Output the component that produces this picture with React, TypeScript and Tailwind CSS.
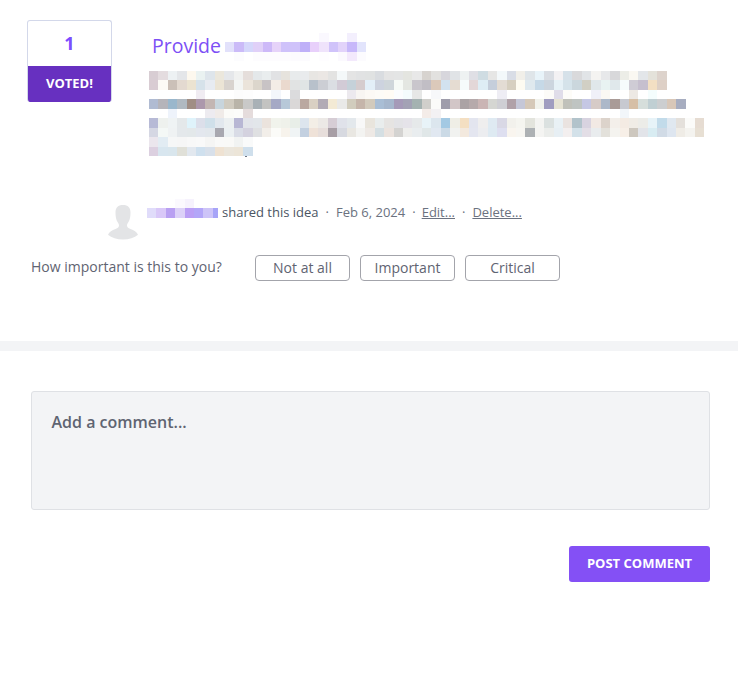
const CELL = 9.41;

const body: string[] = [
  "d8cdd3 e4dcdf edf1f3 e4e6e9 fdf8ee eaf2f1 dee5eb ebe7dc e5e7ea f0f1f0 e5dedb e4e8ea e9edee e1e2e4 e6e3dd e8ebec e9ebed e8e6e3 ebe7e4 e3e3e2 f4f8f9 e4e4e4 e1e2e3 e0e2e2 d9dce0 e4e4e4 e4e5e5 e4e5e0 e8e8e8 d7d3cf e2e1df d7d6dc e0e3e6 eef2f2 dfdfe5 cfdce2 e6e6e5 f3f8fa d9dde6 f1efe9 dfe5e9 e8f3f9 d9dde3 f3f1f3 d6e1e9 d9d9db e1e4e7 f4f3f1 e7e8ea d8d8da ecede7 faf8f2 e3e6e9 e4e2da ddd3cc",
  "d9ccd3 fcfaf6 cbc0b8 e3d9d0 ebe3d1 d6e2ea e7ebf1 ebe4d5 d8d3ce f3f5f3 ebe4da dcd6cc c8c3c5 f3ece6 ead9ce e1e3e3 e0e5e5 b8c1cb ccced4 dbdee3 d2cbd6 c5d1d9 d5ccce e3eff8 cdd3df cfd6da f6faf6 e4e7e2 c9c6cc c1bec5 dbc9ba d2e2ef e5dcd2 f6fbfb e3d7d8 deedf5 c5cedb e3dcd4 d6cfc0 fdfbf1 dfe9ee c6d9e7 ccd5de e6f1f6 d5e3ea cbd7dd d1cfc4 e0e7ea e8f3f2 e0e8eb f6fbfc cfccd5 c6bfce f3dfc3 ded0c6",
  "fff fff fff fff fff f0ecf2 fff fff fff fcfcfc fdfdfd fff fff f3f6fb fff dbdbdd fff fff fff fff fff ece9ee f8f5f2 fcf9f5 fdfbf7 fffbf5 fbfcfe f4fbfd e6e7e6 fff f7f8fa fff fff fff fff fff fff eeedf4 fff fff fff fff fcfbf8 e0dde9 fdfcf8 fff fff f0f0f8 faf8f3 fff fff ede9e4 fff f4fdfd fff",
  "b0bbd2 b5b4ba 9ab7cc b0b9c1 a08e85 ac98ac c3b6b3 c8d5dd d0cbc0 b9b4a9 c9c9c8 a9b1b6 c3c3c1 a5a9c5 b7c8d8 dad8d8 baa8a0 d9d0c3 b2abb5 f3ead5 e9e9e8 d1ccbd c5b5aa d2cabc a9bed5 a6b7cd a59ab8 a3a2b5 a4b2b1 d0cfcb fbfbf9 9f9dab d2c6c7 aba3a5 b6aaab cab5b4 d5d6d2 cfcfd4 b0a1a8 c5c7d7 d5c8b8 f1f2ec a09dc0 e6e3d4 c0c1ba bfc4c2 c5c7e4 d6cbc7 acb8c9 a99b97 c7c9d0 d6bfa6 d6dedb c0cfd3 ccced0 d8c7b8 a7adc0",
  "fff fff eef3fb fff fff fff edebf0 f0ebe8 fbfbf8 fcfcfa e5dcdc fff fff fff fff fff fff fff fff fff fff fff fff fff fff fff fff fff fff f4ece8 f3f1f3 fff fff fff fff fff fff fff fff fff fff fff fff fff fff fff fff fff fff fff f2f6fa",
  "b7bad6 eef1ee eff3f4 e4e8ea dff3fb dcdfea d0e0ea e2e8ee ecf0f1 b8b7d4 e2e4ea e2e6ea ebe3dd f1f3ec eff1ea e8eee8 dde5ee f3eee6 ece9e6 d6cdd5 e0e2ea e3e8ec f8f8f8 e9e5dd e9eded e6e4e2 e3e3e6 e5e3e9 e6e9ea e8f3f8 dce6ee a3c9e3 efeee6 f4dfc2 e3e5ef efeeee dfeaf2 d9d8e5 f2f1ec f5f5f0 e3e4dd f4f4f2 dbe1e0 e9f1f5 eae3e0 b2c3cb d8d3e0 f2e9e4 dcd3cb f3efea f4ebe3 f0ece6 ecece8 e7f3f8 c2dbea e0e8f0 e4e0db fbfbf9 e6dcd2",
  "d5d7e3 f4f8f6 eff2f3 e4e8eb e3e8ea e3e7ee e2e7ec a8a8b0 ebf0f2 d9dce6 d4d2df dfe0e2 f2eee9 fbfbf8 f7f3ec f0f4f5 c3d0e0 efe2d8 e7dedb a79ea5 d7d9e0 e9e7e2 f3f3f1 eee9e5 d5dfe3 ebe3de d4d3d1 eeeeec e9edef e0e7e8 e1e8f1 cbdae6 f1f2f0 f3e9de e4e6f0 ecedf0 deeaf2 dedff0 f9f5ef f7f6f2 adb1b4 f4f4f2 ebedeb e7eff4 f3efef d3e1e9 e3dee6 e9ecee e3e1db f4f3ef f7efe7 cdc7be e2e4e9 d8ecf2 d1dbe6 dee6f0 efece6 f4f3ef e7dfd3",
  "ebe6ed e2ecf3 f6f7f7 f6f6f6 f8f8f8 f9f9f9 f5f5f4 f9f9f8 f9f9f7 f1f3f2 f9fafa",
  "dcd0e0 d8e6ef d9e6ed e0e0d8 e2e8ef cfe0ee d8e0ea efe2d2 ebe6dc ece5d8 cfdfec",
];

const titleRows: string[] = [
  "fff fff fff fff fff fff fff fff fff fff faf8fe fff fff f3effd fff",
  "e2e1fb cbbbf8 d5d7fb e0d0f8 cdb9f8 e6d3f9 cfc2fa cfc2fa bfb0f8 e8d0fb efe3fb d0c3fa e2d3fa c7b8fa e2e4fc",
  "fff fcfcfe fff fdfcfe fdfcfe fdfcfe fdfcfe fcfbfe fcfbfe fff fefdff fff fbf9fe f3e9fc fcfbfe",
];

const nameRows: string[] = [
  "fff fff fff fbf9fe f6f2fd fff fff",
  "e0dcfa d9c8f8 b9a0f2 dcd1f8 bb9ff5 b3a6f8 cdc4f8",
];

function Mosaic({
  rows,
  width,
  height,
  cell = CELL,
  rowH = 9.44,
  className,
  children,
}: {
  rows: string[];
  width: number;
  height: number;
  cell?: number;
  rowH?: number;
  className?: string;
  children?: React.ReactNode;
}) {
  return (
    <svg width={width} height={height} viewBox={`0 0 ${width} ${height}`} className={className} shapeRendering="crispEdges">
      {rows.map((r, y) =>
        r.split(" ").map((c, x) => (
          <rect key={`${x}-${y}`} x={x * cell} y={y * rowH} width={cell + 0.3} height={rowH + 0.3} fill={`#${c}`} />
        )),
      )}
      {children}
    </svg>
  );
}

function Dot() {
  return <span className="mx-[7px] text-[#6b7280]">·</span>;
}

function ChoiceButton({ label }: { label: string }) {
  return (
    <button className="h-[26px] w-[95px] rounded-[4px] border border-[#a3a4ab] bg-white text-[14px] leading-none text-[#5f6472]">
      {label}
    </button>
  );
}

export default function App() {
  return (
    <div className="min-h-[698px] bg-white font-['Open_Sans',sans-serif]">
      <div className="flex items-start pl-[27px] pt-[20px]">
        <div className="w-[85px] shrink-0 overflow-hidden rounded-[3px] border-t border-r border-l border-[#d3d8ea]">
          <div className="flex h-[45px] items-center justify-center text-[18px] font-bold text-[#7c4dff]">1</div>
          <div className="-mx-px flex h-[36px] items-center justify-center rounded-b-[3px] bg-[#6730c0] text-[13px] font-bold text-white">
            VOTED!
          </div>
        </div>
        <div className="ml-[37px] min-w-0">
          <div className="mt-[13px] flex h-[28px] items-center pl-[3px]">
            <span className="-mt-[2px] text-[19.5px] leading-none text-[#7d4ff5]">Provide</span>
            <Mosaic rows={titleRows} width={141} height={28} className="ml-[4px]" />
          </div>
          <Mosaic rows={body} width={558} height={86} className="mt-[10px] block">
            <rect x={96} y={85} width={2} height={1} fill="#6b7280" />
          </Mosaic>
        </div>
      </div>

      <div className="ml-[108px] mt-[43px] flex items-start">
        <svg width="30" height="35" viewBox="0 0 30 37" preserveAspectRatio="none" className="mt-[5px]">
          <path
            d="M15 0C10 0 7.500 2.800 7.500 8c0 4 .5 7.500 2 10 .8 1.300 1.500 2.200 1.500 3.800 0 1.700-1 2.800-3.500 3.700C4 26.800 1.300 28.500 0 31.500 3.500 34.600 9 36.500 15 36.500s11.500-1.900 15-5c-1.300-3-4-4.700-7.500-6-2.500-.9-3.500-2-3.500-3.700 0-1.600.7-2.500 1.500-3.800 1.500-2.500 2-6 2-10 0-5.200-2.500-8-7.500-8Z"
            fill="#e3e4e6"
          />
        </svg>
        <Mosaic rows={nameRows} width={72} height={19} cell={9.4} className="ml-[9px] mt-[-1px]">
          <rect x={66} y={9} width={5} height={10} fill="#a7a4f8" />
        </Mosaic>
        <div className="ml-[3px] mt-[3px] flex items-center text-[13px] leading-[18px] text-[#4b5563]">
          <span>shared this idea</span>
          <Dot />
          <span className="text-[#6b7280]">Feb 6, 2024</span>
          <Dot />
          <span className="-ml-px text-[#6b7280] underline">Edit...</span>
          <Dot />
          <span className="text-[#6b7280] underline">Delete...</span>
        </div>
      </div>

      <div className="ml-[31px] mt-[15px] flex items-start">
        <span className="w-[224px] text-[14px] leading-[24px] text-[#5f6472]">How important is this to you?</span>
        <div className="flex gap-[10px]">
          <ChoiceButton label="Not at all" />
          <ChoiceButton label="Important" />
          <ChoiceButton label="Critical" />
        </div>
      </div>

      <div className="mt-[60px] h-[10px] bg-[#f3f4f6]" />

      <div className="px-[28px] pl-[31px] pt-[40px]">
        <div className="h-[119px] rounded-[3px] border border-[#dfe1e5] bg-[#f3f4f6] px-[19.5px] pt-[18px] text-[16px] font-semibold leading-[24px] text-[#5f6472]">
          Add a comment...
        </div>
        <div className="mt-[36px] flex justify-end">
          <button className="h-[36px] w-[141px] rounded-[3px] bg-[#8450f5] text-[13px] font-bold text-white">POST COMMENT</button>
        </div>
      </div>
    </div>
  );
}
